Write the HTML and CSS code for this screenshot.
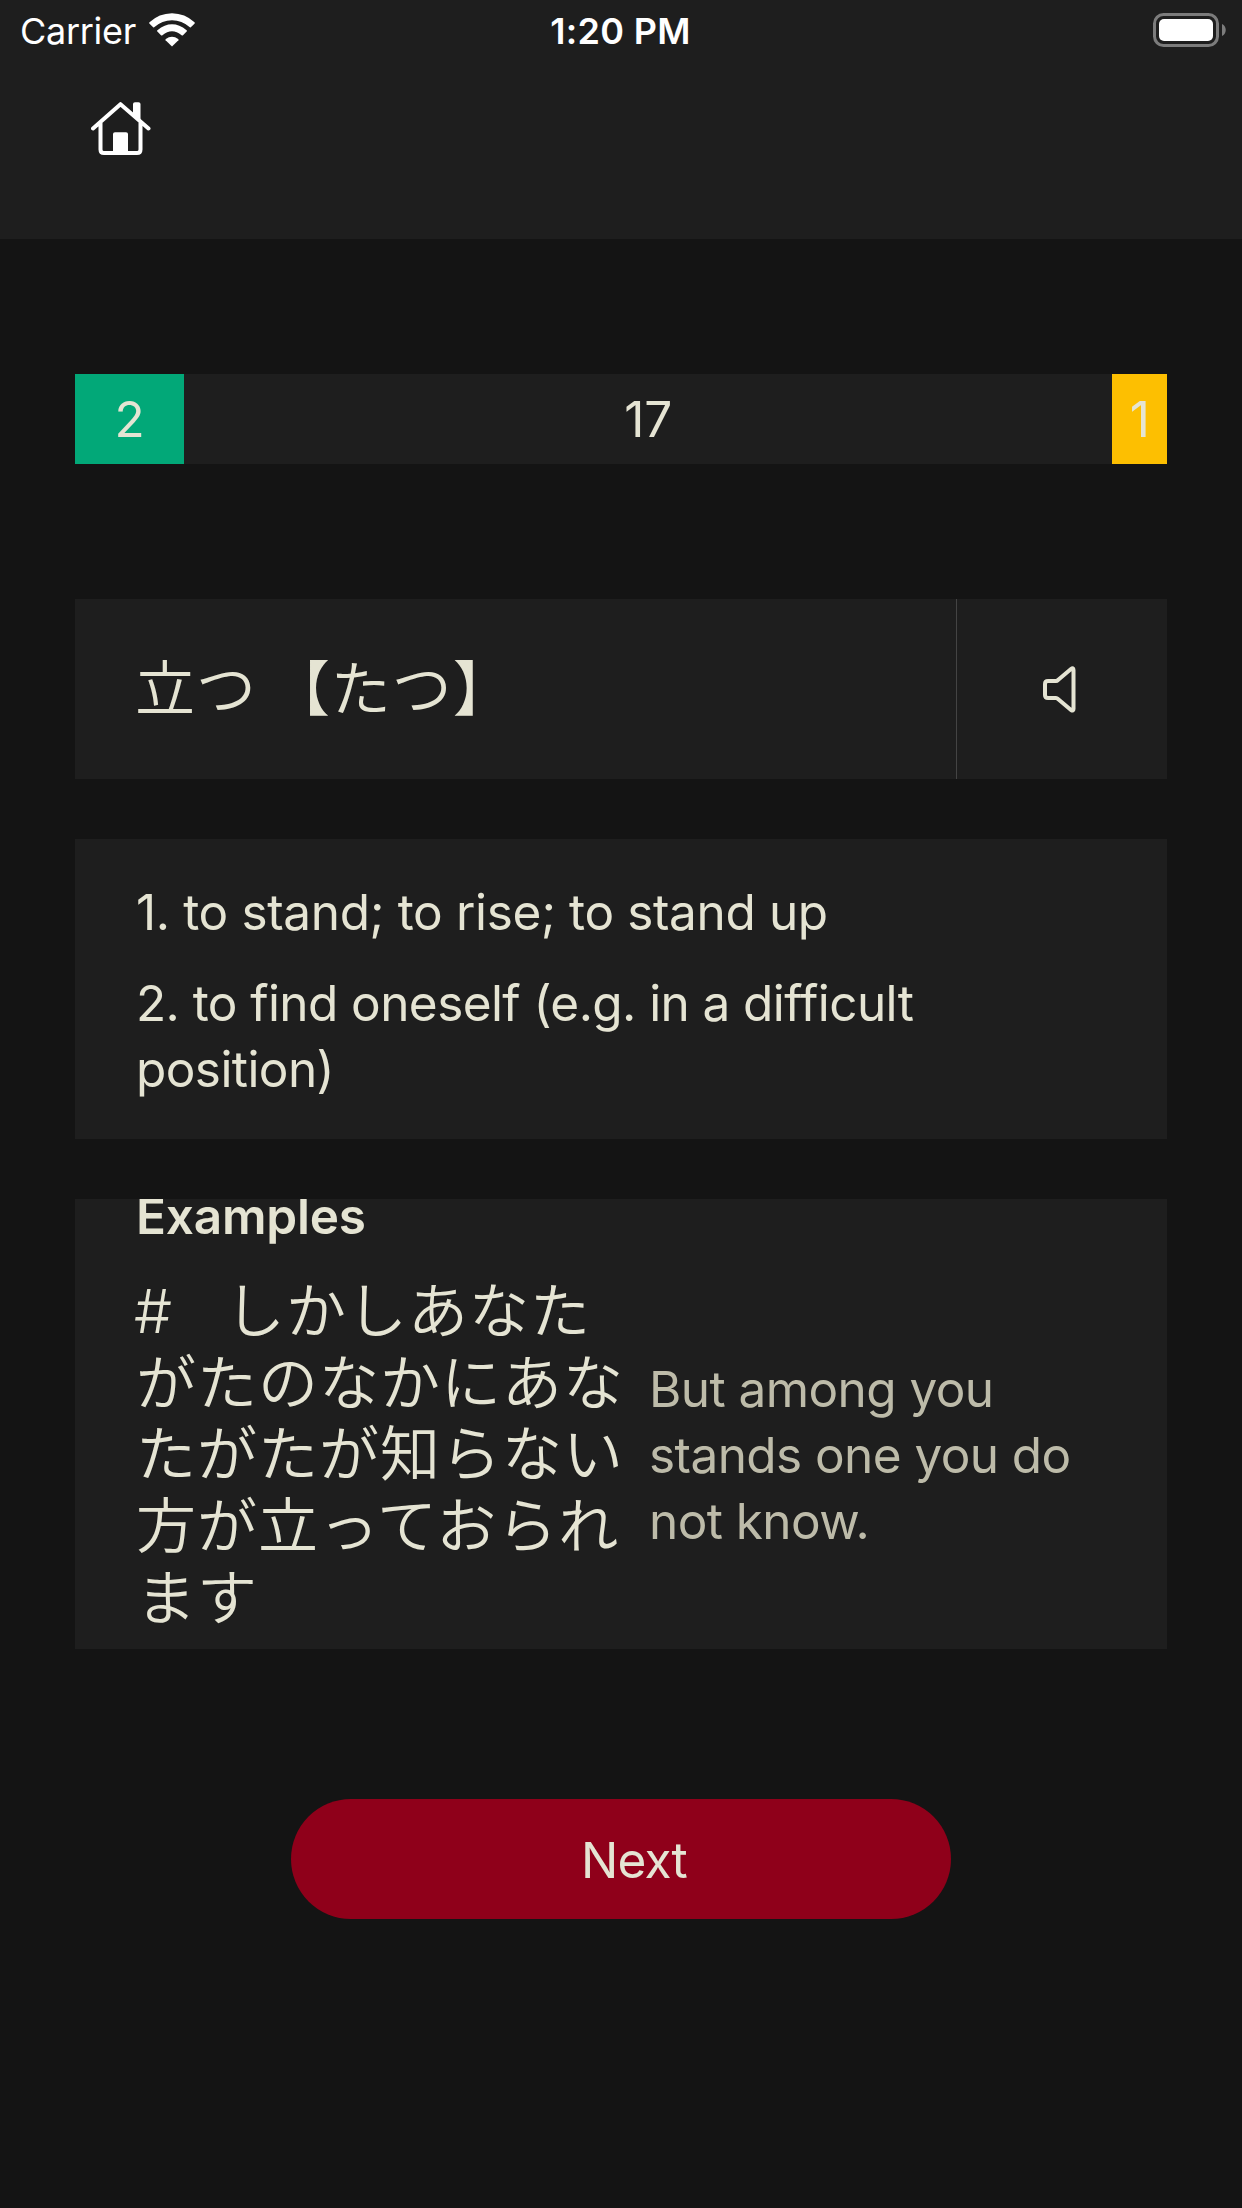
FILE: index.html
```html
<!DOCTYPE html>
<html lang="en">
<head>
<meta charset="utf-8">
<title>Flashcards</title>
<link rel="stylesheet" href="styles.css">
</head>
<body>
<header class="header">
  <div class="status">
    <div class="status-left">
      <span class="carrier">Carrier</span>
      <svg class="wifi" viewBox="0 0 46 34" aria-hidden="true">
        <path d="M23 33.500 16.600 27.200Q16.200 26.500 16.800 26Q23 21.400 29.200 26Q29.800 26.500 29.400 27.200Z"/>
        <path d="M8.100 18.300Q7.800 17.700 8.400 17.200Q23 5.400 37.600 17.200Q38.200 17.700 37.900 18.300L34 22.200Q33.300 22.700 32.600 22.200Q23 14.300 13.400 22.200Q12.700 22.700 12 22.200Z"/>
        <path d="M0.300 10.400Q0 9.900 0.500 9.300Q10 0.500 23 0.300Q36 0.500 45.500 9.300Q46 9.900 45.700 10.400L41.800 14.200Q41.100 14.600 40.500 14.100Q33 7.400 23 7.300Q13 7.400 5.500 14.100Q4.900 14.600 4.200 14.200Z"/>
      </svg>
    </div>
    <span class="time">1:20 PM</span>
    <svg class="battery" viewBox="0 0 74 34" aria-hidden="true">
      <rect class="battery-shell" x="1.500" y="1.500" width="63" height="31" rx="9"/>
      <rect class="battery-level" x="6" y="6" width="54" height="22" rx="5"/>
      <path class="battery-cap" d="M69 11C74 13 74 21 69 23Z"/>
    </svg>
  </div>
  <svg class="home" viewBox="0 0 60 54" aria-hidden="true">
    <path d="M2 26.500 29.500 2.200 57.500 26.500M9.500 21V47.500Q9.500 51 13 51H46Q49.500 51 49.500 47.500V21"/>
    <path class="solid" d="M42 13V2Q42 0.300 44 0.300H47.500Q49.500 0.300 49.500 2V20ZM22 50V32Q22 30.300 24 30.300H35Q37 30.300 37 32V50Z"/>
  </svg>
</header>
<main class="main">
  <div class="progress">
    <span class="known" style="flex-grow: 2"><b>2</b></span>
    <span class="left" style="flex-grow: 17"><b>17</b></span>
    <span class="again" style="flex-grow: 1"><b>1</b></span>
  </div>
  <section class="card word">
    <div class="term" lang="ja">立つ<span class="gap"> </span>【たつ】</div>
    <div class="sound">
      <svg class="speaker" viewBox="0 0 33 47" aria-hidden="true">
        <path d="M2 18V29Q2 32 5 32H13Q14 32 15 33L28 44Q30.500 45.500 30.500 43V4Q30.500 1 28 3L15 14Q14 15 13 15H5Q2 15 2 18Z"/>
      </svg>
    </div>
  </section>
  <section class="card meanings">
    <p>1. to stand; to rise; to stand up</p>
    <p class="long">2. to find oneself (e.g. in a difficult position)</p>
  </section>
  <section class="card examples">
    <h2>Examples</h2>
    <div class="example">
      <p class="sentence" lang="ja">#<span class="indent">　</span>しかしあなたがたのなかにあなたがたが知らない方が立っておられます</p>
      <p class="translation">But among you stands one you do not know.</p>
    </div>
  </section>
  <button class="next">Next</button>
</main>
</body>
</html>
```
FILE: styles.css
```css
* { box-sizing: border-box; margin: 0; padding: 0; }
body { width: 1242px; min-height: 2208px; background: #141414; color: #e5e4d3; font-family: Inter, sans-serif; font-size: 49.5px; line-height: 66px; }

/* Header */
.header { height: 239px; background: #1e1e1e; color: #fff; }
.status { display: grid; grid-template-columns: 1fr auto 1fr; align-items: center; height: 60px; padding: 0 15px 0 20px; font-size: 36px; line-height: 54px; }
.status-left { display: flex; align-items: center; gap: 13px; }
.carrier { padding-top: 2px; letter-spacing: -0.3px; }
.wifi { width: 46px; height: 34px; fill: #fff; }
.time { padding: 2px 3px 0 0; margin-left: -3px; font-weight: 600; letter-spacing: 0.3px; }
.battery { width: 74px; height: 34px; justify-self: end; }
.battery-shell { fill: none; stroke: #7c7c7c; stroke-width: 3; }
.battery-level { fill: #fff; }
.battery-cap { fill: #7c7c7c; }
.home { display: block; width: 60px; height: 54px; margin: 42px 0 0 91px; fill: none; stroke: #fff; stroke-width: 4; stroke-linecap: round; stroke-linejoin: round; }
.home .solid { fill: #fff; stroke: none; }

/* Session progress */
.main { display: flex; flex-direction: column; padding: 135px 75px 0; }
.progress { display: flex; height: 90px; background: #1e1e1e; }
.progress span { display: flex; flex-basis: 0; align-items: center; justify-content: center; }
.progress b { font-weight: 400; }
.known { background: #02a878; }
.again { background: #fdbf01; }

/* Cards */
.card { background: #1e1e1e; }
.word { display: flex; height: 180px; margin-top: 135px; }
.term { flex: 1; padding-left: 60px; line-height: 180px; }
.term, .sentence { font-family: Inter, "Noto Sans CJK JP", sans-serif; font-size: 60px; font-weight: 350; letter-spacing: 1px; }
.gap { margin-right: -5px; }
.sound { display: flex; width: 211px; align-items: center; justify-content: center; padding-right: 5px; border-left: 1px solid #444; }
.speaker { width: 33px; height: 47px; fill: none; stroke: #e5e4d3; stroke-width: 4; stroke-linejoin: round; }
.meanings { display: flex; flex-direction: column; gap: 25px; height: 300px; margin-top: 60px; padding: 40px 61px 0; letter-spacing: -0.36px; }
.long { letter-spacing: -0.58px; }
.examples { height: 450px; margin-top: 60px; padding: 0 61px; overflow: hidden; }
.examples h2 { margin-top: -16px; font-size: 49.5px; font-weight: 600; letter-spacing: -0.2px; }
.example { display: flex; align-items: center; margin-top: 27px; }
.sentence { width: 490px; line-height: 71.7px; text-indent: -2px; }
.indent { letter-spacing: -8px; }
.translation { flex: 1; margin-left: 23px; color: #bdbba9; letter-spacing: -0.57px; }

.next { width: 660px; height: 120px; margin: 150px auto 0; padding: 2px 0 0 26px; border: 0; border-radius: 60px; background: #8f001a; color: inherit; font: inherit; letter-spacing: -0.8px; }
```
